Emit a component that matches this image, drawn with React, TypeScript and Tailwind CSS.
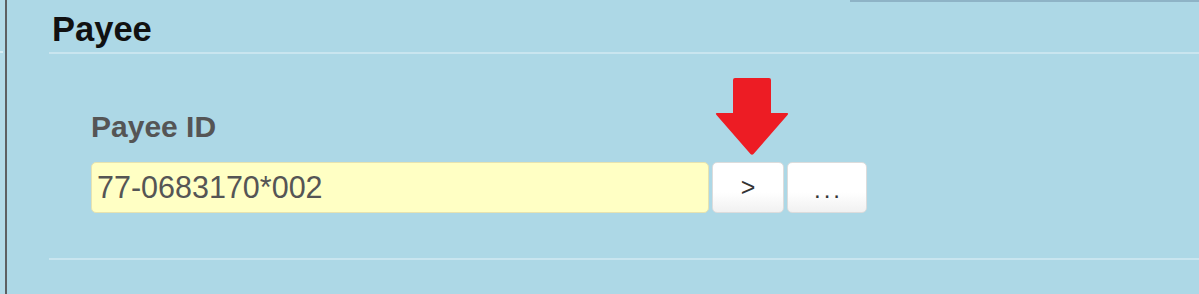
import React from "react";

export default function App() {
  return (
    <div
      className="relative flex h-[294px] w-[1199px] overflow-hidden bg-[#add8e6]"
      style={{ fontFamily: '"Liberation Sans", Arial, sans-serif' }}
    >
      {/* left edge */}
      <div className="relative h-full w-[5px] bg-[#b3dbe8]">
        <div className="absolute left-0 top-[51px] h-[2px] w-[3px] bg-[#d6ecf3]" />
      </div>
      <div className="h-full w-[2px] bg-[#5c6062]" />

      {/* main */}
      <div className="flex flex-1 flex-col">
        <div className="flex h-[2px]">
          <div className="w-[843px]" />
          <div className="flex-1 bg-[#8eb3c6]" />
        </div>

        <div className="ml-[42px] flex flex-col">
          <div className="mt-[7px] border-b-2 border-[#c9e5ef] pb-[3px] pl-[3px]">
            <h1 className="text-[34.5px] font-bold leading-[40px] text-[#111]">Payee</h1>
          </div>

          <div className="border-b-2 border-[#c9e5ef] pb-[45px] pl-[42px] pt-[55px]">
            <label className="block text-[30px] font-bold leading-[36px] text-[#555]">Payee ID</label>
            <div className="mt-[17px] flex h-[51px] items-stretch">
              <div className="flex w-[618px] items-center rounded-[5px] border border-[#e6e3b0] bg-[#ffffc4] pl-[5px] text-[30.5px] text-[#555]">
                77-0683170*002
              </div>
              <button className="ml-[3px] flex w-[72px] items-center justify-center rounded-[5px] border border-[#dcdcdc] bg-gradient-to-b from-white from-60% to-[#f1f1f1] text-[25px] text-[#333]">
                &gt;
              </button>
              <button className="ml-[3px] flex w-[80px] items-center justify-center rounded-[5px] border border-[#dcdcdc] bg-gradient-to-b from-white from-60% to-[#f1f1f1] pl-[3px] pt-[4px] text-[24px] tracking-[3px] text-[#333]">
                ...
              </button>
            </div>
          </div>
        </div>
      </div>

      {/* red arrow overlay */}
      <svg
        className="absolute left-[715px] top-[78px]"
        width="74"
        height="78"
        viewBox="0 0 74 78"
      >
        <path
          d="M20 0 H54 Q56 0 56 2 V35 H72 Q74 35 72.5 37 L38.5 76 Q37 77.5 35.5 76 L1.5 37 Q0 35 2 35 H18 V2 Q18 0 20 0 Z"
          fill="#ed1c24"
        />
      </svg>
    </div>
  );
}
